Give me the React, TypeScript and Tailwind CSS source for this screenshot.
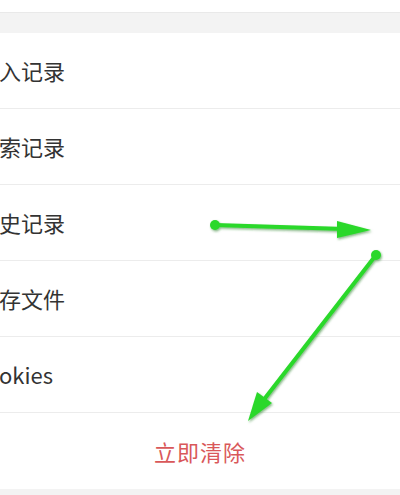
const rows = ['入记录', '索记录', '史记录', '存文件', 'okies']

function Arrows() {
  return (
    <svg
      className="pointer-events-none absolute left-0 top-0"
      width={400}
      height={495}
      viewBox="0 0 400 495"
    >
      <defs>
        <filter id="sh" x="-20%" y="-20%" width="140%" height="140%">
          <feDropShadow dx="1" dy="1.5" stdDeviation="1.2" floodColor="#1a7a1a" floodOpacity="0.55" />
        </filter>
      </defs>
      <g filter="url(#sh)" fill="#2ad82a" stroke="#2ad82a" strokeLinecap="round">
        <line x1={215} y1={225} x2={345} y2={229} strokeWidth={4} />
        <circle cx={215} cy={225} r={5} stroke="none" />
        <polygon points="337,221 371,230 337,238" stroke="none" />
        <line x1={376} y1={255} x2={262} y2={402} strokeWidth={4} />
        <circle cx={376} cy={255} r={5} stroke="none" />
        <polygon points="272,403 257,392 248,421" stroke="none" />
      </g>
    </svg>
  )
}

export default function App() {
  return (
    <div
      className="relative w-[400px] h-[495px] overflow-hidden bg-white"
      style={{ fontFamily: '"Noto Sans CJK SC", "Noto Sans", sans-serif' }}
    >
      <div className="h-[12px] bg-white" />
      <div className="h-[21px] bg-[#f3f3f3] border-t border-[#e9e9e9]" />
      <div className="flex flex-col">
        {rows.map((r) => (
          <div
            key={r}
            className="flex h-[76px] items-center border-b border-[#ececec] bg-white text-[22px] text-[#333333]"
          >
            <span className="-ml-[1px]">{r}</span>
          </div>
        ))}
        <div className="flex h-[76px] items-center justify-center bg-white text-[22px] tracking-[1px] text-[#d9585a]">
          立即清除
        </div>
      </div>
      <div className="h-[7px] bg-[#f3f3f3]" />
      <Arrows />
    </div>
  )
}
